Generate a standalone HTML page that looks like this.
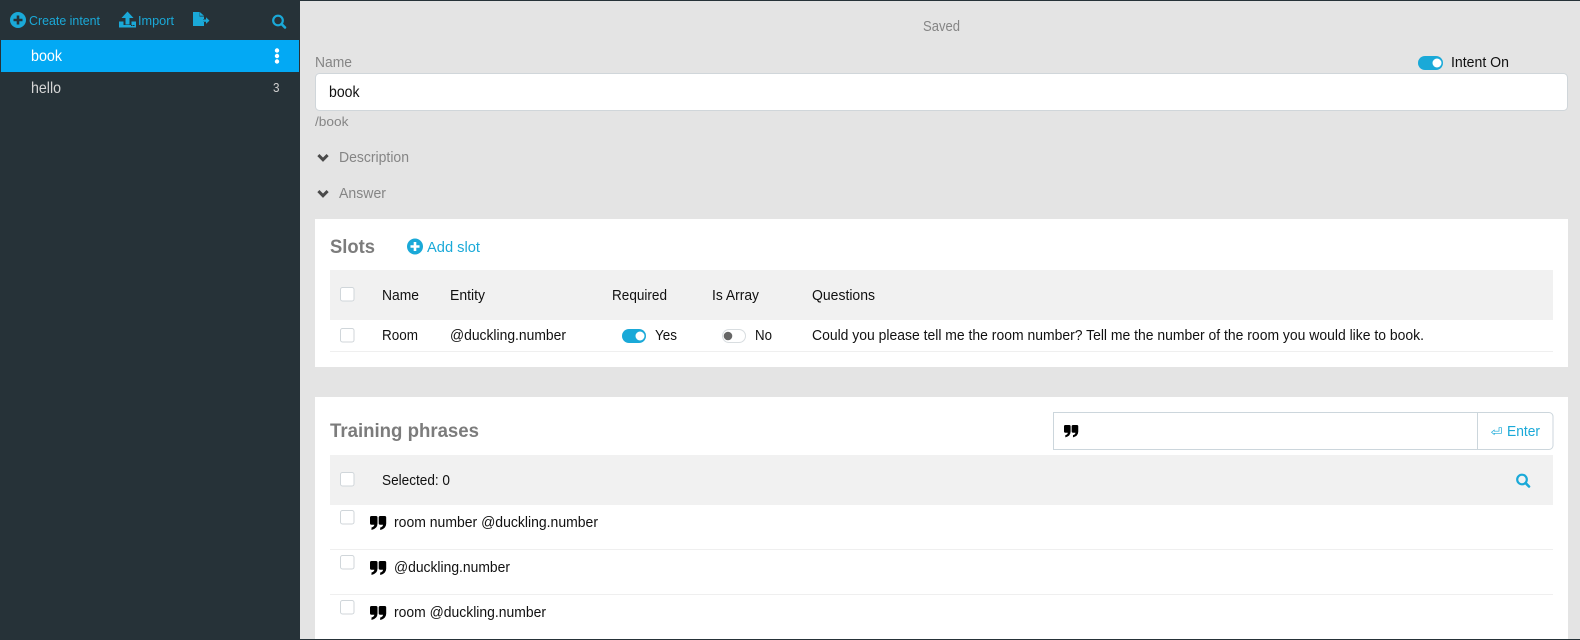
<!DOCTYPE html>
<html><head><meta charset="utf-8"><title>Intent</title>
<style>
html,body{margin:0;padding:0;background:#263238;width:1580px;height:640px;overflow:hidden}
svg{display:block}
text{font-family:"Liberation Sans",sans-serif;font-size:15px;fill:#111}
.a{fill:#1aa9d8}.g{fill:#858585}
</style></head><body>
<svg width="1580" height="640" viewBox="0 0 1580 640" xmlns="http://www.w3.org/2000/svg">
<defs>
<g id="plus"><circle cx="8" cy="8" r="8"/><path d="M6.700 3.500h2.600v3.200h3.200v2.600H9.300v3.200H6.700V9.300H3.500V6.700h3.200z" fill="var(--p)"/></g>
<g id="quote"><path d="M0 1.500Q0 0 1.500 0H6Q7.500 0 7.500 1.500V7.500Q7.500 12.500 1.500 14V11.500Q4.300 10.800 4.300 8.800H1.500Q0 8.800 0 7.300Z"/><path transform="translate(8.700 0)" d="M0 1.500Q0 0 1.500 0H6Q7.500 0 7.500 1.500V7.500Q7.500 12.500 1.500 14V11.500Q4.300 10.800 4.300 8.800H1.500Q0 8.800 0 7.300Z"/></g>
<g id="search"><circle cx="6" cy="6" r="4.800" fill="none" stroke="#1aa9d8" stroke-width="2.200"/><path d="M9.600 9.600L13 13" stroke="#1aa9d8" stroke-width="2.600" stroke-linecap="round"/></g>
<path id="chev" d="M1.400 1.600L6 6.200L10.600 1.600" fill="none" stroke="#4a4a4a" stroke-width="3"/>
</defs>

<rect width="1580" height="640" fill="#263238"/>
<!-- main -->
<rect x="300" y="1" width="1280" height="638" fill="#e4e4e4"/>

<!-- sidebar -->
<g fill="#1aa9d8">
<use href="#plus" x="10" y="12" style="--p:#263238"/>
<path d="M127.500 11.500l6 6.500h-4v6.500h-4V18h-4z"/>
<path d="M119 21.500h4.500v3.500h8v-3.500h4.500v6h-17z"/>
<path d="M193 12h6.500v4.500h4.500v2.500h-1v3h1v4h-11z"/>
<path d="M199.800 12l4.200 3.800h-4.200z"/>
<path d="M203 19.500h3v-2.200l3.500 3.300-3.500 3.300v-2.200h-3z"/>
</g>
<rect x="131" y="25" width="1.500" height="1" fill="#263238"/><rect x="133" y="25" width="1.500" height="1" fill="#263238"/>
<text x="29" y="25" class="a" style="font-size:13px" textLength="71" lengthAdjust="spacingAndGlyphs">Create intent</text>
<text x="138" y="25" class="a" style="font-size:13px" textLength="36" lengthAdjust="spacingAndGlyphs">Import</text>
<use href="#search" x="272" y="14.500"/>
<rect x="1" y="40" width="298" height="32" fill="#03a9f4"/>
<text x="31" y="61" style="font-size:16px;fill:#fff" textLength="31" lengthAdjust="spacingAndGlyphs">book</text>
<circle cx="277" cy="50.500" r="2.200" fill="#fff"/><circle cx="277" cy="56" r="2.200" fill="#fff"/><circle cx="277" cy="61.500" r="2.200" fill="#fff"/>
<text x="31" y="93" style="font-size:16px;fill:#d6d6d6" textLength="30" lengthAdjust="spacingAndGlyphs">hello</text>
<text x="273" y="92" style="font-size:13px;fill:#d0d0d0" textLength="6.500" lengthAdjust="spacingAndGlyphs">3</text>

<!-- form -->
<text x="923" y="31" class="g" textLength="37" lengthAdjust="spacingAndGlyphs">Saved</text>
<text x="315" y="67" class="g" textLength="37" lengthAdjust="spacingAndGlyphs">Name</text>
<rect x="1418" y="56" width="25" height="14" rx="7" fill="#1aa9d8"/><circle cx="1437" cy="63" r="4.500" fill="#fff"/>
<text x="1451" y="67" textLength="58" lengthAdjust="spacingAndGlyphs">Intent On</text>
<rect x="315.500" y="73.500" width="1252" height="37" rx="4" fill="#fff" stroke="#d0d6da"/>
<text x="329" y="97" style="font-size:16px" textLength="30.500" lengthAdjust="spacingAndGlyphs">book</text>
<text x="315" y="126" class="g" style="font-size:13px" textLength="33.500" lengthAdjust="spacingAndGlyphs">/book</text>
<use href="#chev" x="317" y="153.500"/>
<text x="339" y="162" class="g" textLength="70" lengthAdjust="spacingAndGlyphs">Description</text>
<use href="#chev" x="317" y="189.500"/>
<text x="339" y="198" class="g" textLength="47" lengthAdjust="spacingAndGlyphs">Answer</text>

<!-- slots panel -->
<rect x="315" y="219" width="1253" height="148" fill="#fff"/>
<text x="330" y="253" style="font-size:19px;font-weight:bold;fill:#7c7c7c" textLength="45" lengthAdjust="spacingAndGlyphs">Slots</text>
<g fill="#1aa9d8"><use href="#plus" x="407" y="238.500" style="--p:#fff"/></g>
<text x="427" y="252" class="a" textLength="53" lengthAdjust="spacingAndGlyphs">Add slot</text>
<rect x="330" y="270" width="1223" height="50" fill="#f1f1f1"/>
<rect x="340.500" y="287.500" width="13.500" height="13.500" rx="2" fill="#fff" stroke="#d0d6da"/>
<text x="382" y="300" textLength="37" lengthAdjust="spacingAndGlyphs">Name</text>
<text x="450" y="300" textLength="35" lengthAdjust="spacingAndGlyphs">Entity</text>
<text x="612" y="300" textLength="55" lengthAdjust="spacingAndGlyphs">Required</text>
<text x="712" y="300" textLength="47" lengthAdjust="spacingAndGlyphs">Is Array</text>
<text x="812" y="300" textLength="63" lengthAdjust="spacingAndGlyphs">Questions</text>
<rect x="340.500" y="328.500" width="13.500" height="13.500" rx="2" fill="#fff" stroke="#d0d6da"/>
<text x="382" y="340" textLength="36" lengthAdjust="spacingAndGlyphs">Room</text>
<text x="450" y="340" textLength="116" lengthAdjust="spacingAndGlyphs">@duckling.number</text>
<rect x="622" y="329" width="24" height="14" rx="7" fill="#1aa9d8"/><circle cx="640" cy="336" r="4.500" fill="#fff"/>
<text x="655" y="340" textLength="22" lengthAdjust="spacingAndGlyphs">Yes</text>
<rect x="722.500" y="329.500" width="23" height="13" rx="6.500" fill="#fff" stroke="#d8dde0"/><circle cx="728" cy="336" r="4.300" fill="#666"/>
<text x="755" y="340" textLength="17" lengthAdjust="spacingAndGlyphs">No</text>
<text x="812" y="340" textLength="612" lengthAdjust="spacingAndGlyphs">Could you please tell me the room number? Tell me the number of the room you would like to book.</text>
<rect x="330" y="351" width="1223" height="1" fill="#efefef"/>

<!-- training panel -->
<rect x="315" y="397" width="1253" height="242" fill="#fff"/>
<text x="330" y="437" style="font-size:19px;font-weight:bold;fill:#7c7c7c" textLength="149" lengthAdjust="spacingAndGlyphs">Training phrases</text>
<path d="M1053.500 412.500H1549a4 4 0 0 1 4 4V445.500a4 4 0 0 1-4 4H1053.500Z" fill="#fff" stroke="#ccd6dc"/>
<rect x="1477" y="412" width="1" height="37.500" fill="#ccd6dc"/>
<use href="#quote" transform="translate(1064 425) scale(.88)"/>
<text x="1490.500" y="436" class="a" style="font-family:'DejaVu Sans',sans-serif;font-size:12px" textLength="12" lengthAdjust="spacingAndGlyphs">⏎</text>
<text x="1507" y="436" class="a" textLength="33" lengthAdjust="spacingAndGlyphs">Enter</text>
<rect x="330" y="455" width="1223" height="50" fill="#f1f1f1"/>
<rect x="340.500" y="472.500" width="13.500" height="13.500" rx="2" fill="#fff" stroke="#d0d6da"/>
<text x="382" y="485" textLength="68" lengthAdjust="spacingAndGlyphs">Selected: 0</text>
<use href="#search" x="1516" y="473.500"/>

<rect x="340.500" y="510.500" width="13.500" height="13.500" rx="2" fill="#fff" stroke="#d0d6da"/>
<use href="#quote" x="370" y="516"/>
<text x="394" y="527" textLength="204" lengthAdjust="spacingAndGlyphs">room number @duckling.number</text>
<rect x="330" y="549" width="1223" height="1" fill="#efefef"/>
<rect x="340.500" y="555.500" width="13.500" height="13.500" rx="2" fill="#fff" stroke="#d0d6da"/>
<use href="#quote" x="370" y="561"/>
<text x="394" y="572" textLength="116" lengthAdjust="spacingAndGlyphs">@duckling.number</text>
<rect x="330" y="594" width="1223" height="1" fill="#efefef"/>
<rect x="340.500" y="600.500" width="13.500" height="13.500" rx="2" fill="#fff" stroke="#d0d6da"/>
<use href="#quote" x="370" y="606"/>
<text x="394" y="617" textLength="152" lengthAdjust="spacingAndGlyphs">room @duckling.number</text>
</svg>
</body></html>
